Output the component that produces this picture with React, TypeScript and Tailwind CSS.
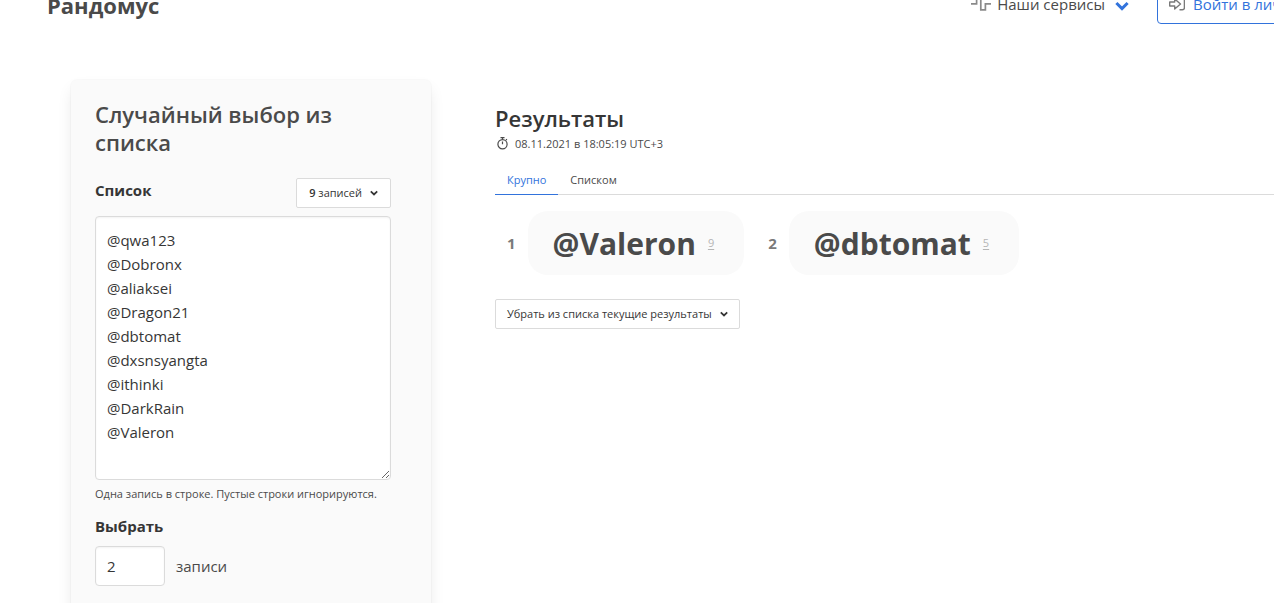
import { useState } from "react";

const entries = [
  "@qwa123",
  "@Dobronx",
  "@aliaksei",
  "@Dragon21",
  "@dbtomat",
  "@dxsnsyangta",
  "@ithinki",
  "@DarkRain",
  "@Valeron",
];

const winners = [
  { place: 1, name: "@Valeron", line: 9 },
  { place: 2, name: "@dbtomat", line: 5 },
];

function Chevron({ className }: { className: string }) {
  return (
    <svg className={className} viewBox="0 0 12 8" fill="none" stroke="currentColor" strokeWidth="2.6" aria-hidden="true">
      <path d="M1.2 1.4 6 6.2l4.8-4.8" />
    </svg>
  );
}

function ServicesIcon() {
  return (
    <svg className="h-5 w-5 shrink-0 text-[#8a8a8a]" viewBox="0 0 20 20" fill="none" stroke="currentColor" strokeWidth="1.7" aria-hidden="true">
      <path d="M0 9.9h5.6V2M9.8 2v13.8h4.6V9.9H20" />
    </svg>
  );
}

function LoginIcon() {
  return (
    <svg className="h-4 w-4 shrink-0 text-[#7a7a7a]" viewBox="0 0 16 16" fill="none" stroke="currentColor" strokeWidth="1.4" strokeLinejoin="round" aria-hidden="true">
      <path d="M.7 6h5V3l5.8 5-5.8 5v-3h-5z" />
      <path d="M10.5 2.2h2.9a2 2 0 0 1 2 2v7.6a2 2 0 0 1-2 2h-2.9" />
    </svg>
  );
}

function StopwatchIcon() {
  return (
    <svg className="h-3.5 w-3.5 shrink-0" viewBox="0 0 14 14" fill="none" stroke="currentColor" strokeWidth="1.2" aria-hidden="true">
      <circle cx="5.5" cy="7.2" r="4.6" />
      <path d="M3.5.7h4M5.5.7v2M5.5 4.6v2.6M9 3l.9-.9" />
    </svg>
  );
}

export default function App() {
  const [list, setList] = useState(entries.join("\n"));
  const [count, setCount] = useState("2");

  return (
    <div className="h-screen overflow-hidden bg-white font-['Open_Sans','Noto_Sans',sans-serif] text-[15px] leading-6 text-[#4a4a4a]">
      <header className="-mt-4 flex h-10 items-center justify-between pl-[47px]">
        <a href="#" className="pt-0.5 text-[22px] leading-8 font-bold">Рандомус</a>
        <nav className="-mr-24 flex h-10 shrink-0 items-center gap-7">
          <button type="button" className="flex items-center gap-1.5">
            <ServicesIcon />
            <span>Наши сервисы</span>
            <Chevron className="mt-1 ml-1 h-2.5 w-3.5 text-[#3273dc]" />
          </button>
          <a href="#" className="flex h-10 w-[213px] items-center gap-2 rounded border border-[#3273dc] px-[11px] whitespace-nowrap text-[#3273dc]">
            <LoginIcon />
            Войти в личный кабинет
          </a>
        </nav>
      </header>

      <main className="flex items-start gap-16 pt-14 pl-[71px]">
        <section className="w-[360px] shrink-0 rounded-md bg-[#fafafa] pt-5 pr-10 pb-20 pl-6 shadow-[0_8px_16px_-2px_rgba(10,10,10,0.1),0_0_0_1px_rgba(10,10,10,0.02)]">
          <h1 className="text-[22px] leading-7 font-semibold">Случайный выбор из списка</h1>

          <div className="mt-[22px] mb-2 flex items-center justify-between">
            <label htmlFor="list" className="pb-1.5 font-bold text-[#363636]">Список</label>
            <button type="button" className="flex h-[30px] items-center rounded-xs border border-[#dbdbdb] bg-white px-3 text-[11px] text-[#363636]">
              <span><b className="font-semibold">9</b> записей</span>
              <Chevron className="ml-2 h-1.5 w-2" />
            </button>
          </div>
          <textarea
            id="list"
            value={list}
            onChange={(e) => setList(e.target.value)}
            className="block h-[264px] w-full resize-y rounded border border-[#dbdbdb] bg-white px-[11px] py-[11px] text-[#363636] shadow-[inset_0_1px_2px_rgba(10,10,10,0.05)] outline-none"
          />
          <p className="mt-1 text-[11px] leading-5 whitespace-nowrap">Одна запись в строке. Пустые строки игнорируются.</p>

          <label htmlFor="count" className="mt-2.5 block font-bold text-[#363636]">Выбрать</label>
          <div className="mt-2 flex items-center gap-[11px]">
            <input
              id="count"
              value={count}
              onChange={(e) => setCount(e.target.value)}
              className="h-10 w-[70px] rounded border border-[#dbdbdb] bg-white px-[11px] text-[#363636] shadow-[inset_0_1px_2px_rgba(10,10,10,0.05)] outline-none"
            />
            <span>записи</span>
          </div>
        </section>

        <section className="min-w-0 flex-1 pt-[22px]">
          <h2 className="text-[22px] leading-8 font-semibold text-[#363636]">Результаты</h2>
          <p className="flex items-center gap-1 pl-0.5 text-[11px] leading-5">
            <StopwatchIcon />
            <span>08.11.2021 в 18:05:19 UTC+3</span>
          </p>

          <div role="tablist" className="mt-3 flex border-b border-[#dbdbdb] text-[11px] leading-4">
            <button type="button" role="tab" aria-selected="true" className="-mb-px border-b border-[#3273dc] px-3 py-1.5 text-[#3273dc]">Крупно</button>
            <button type="button" role="tab" aria-selected="false" className="-mb-px border-b border-transparent px-3 py-1.5">Списком</button>
          </div>

          <ol className="mt-4 flex gap-6 pl-3">
            {winners.map((w) => (
              <li key={w.place} className="flex items-center gap-3">
                <span className="font-bold text-[#7a7a7a]">{w.place}</span>
                <div className="flex h-16 items-center gap-3 rounded-[20px] bg-[#fafafa] pr-[30px] pl-[25px]">
                  <strong className="pt-0.5 text-[30px] leading-10 font-bold">{w.name}</strong>
                  <a href="#" className="text-[11px] text-[#b5b5b5] underline underline-offset-2">{w.line}</a>
                </div>
              </li>
            ))}
          </ol>

          <button type="button" className="mt-6 flex h-[30px] items-center rounded-xs border border-[#dbdbdb] bg-white px-[11px] text-[11px] text-[#363636]">
            Убрать из списка текущие результаты
            <Chevron className="ml-2 h-1.5 w-2" />
          </button>
        </section>
      </main>
    </div>
  );
}
